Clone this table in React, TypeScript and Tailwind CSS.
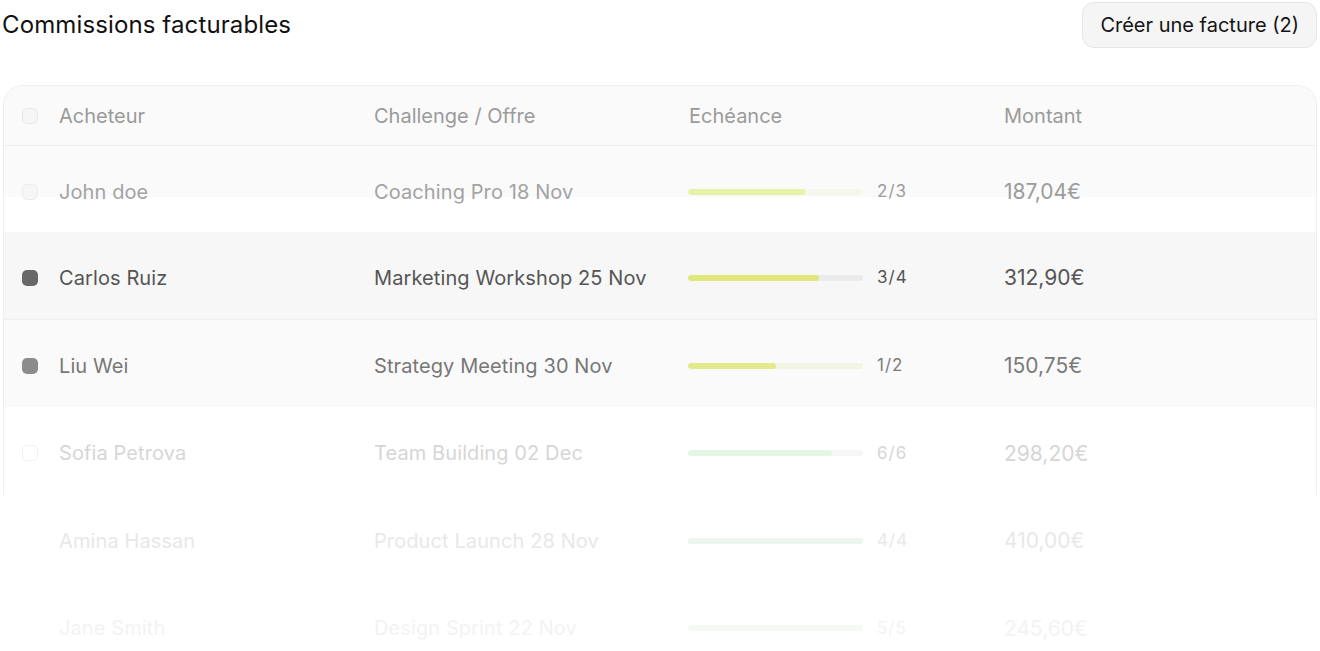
import React from 'react';

type Row = {
  name: string;
  offer: string;
  done: number;
  total: number;
  pct: number;
  amount: string;
  text: string;
  amountText: string;
  box: string;
  bg: string;
  fill: string;
  track: string;
};

const rows: Row[] = [
  {
    name: 'John doe',
    offer: 'Coaching Pro 18 Nov',
    done: 2,
    total: 3,
    pct: 66.6,
    amount: '187,04€',
    text: 'text-[#a3a3a3]',
    amountText: 'text-[#9c9c9c]',
    box: 'border border-[#ececec] bg-[#f6f6f6]',
    bg: 'bg-[linear-gradient(to_bottom,#fafafa_59%,#ffffff_59%)]',
    fill: 'bg-[#e8f1a8]',
    track: 'bg-[#f5f7e8]',
  },
  {
    name: 'Carlos Ruiz',
    offer: 'Marketing Workshop 25 Nov',
    done: 3,
    total: 4,
    pct: 75,
    amount: '312,90€',
    text: 'text-[#555555]',
    amountText: 'text-[#555555]',
    box: 'bg-[#686868]',
    bg: 'bg-[#f7f7f7] border-b border-[#efefef]',
    fill: 'bg-[#dfe878]',
    track: 'bg-[#ebebeb]',
  },
  {
    name: 'Liu Wei',
    offer: 'Strategy Meeting 30 Nov',
    done: 1,
    total: 2,
    pct: 50,
    amount: '150,75€',
    text: 'text-[#777777]',
    amountText: 'text-[#7a7a7a]',
    box: 'bg-[#8c8c8c]',
    bg: 'bg-[#fafafa]',
    fill: 'bg-[#e2ea8c]',
    track: 'bg-[#f2f5e3]',
  },
  {
    name: 'Sofia Petrova',
    offer: 'Team Building 02 Dec',
    done: 6,
    total: 6,
    pct: 82,
    amount: '298,20€',
    text: 'text-[#d6d6d6]',
    amountText: 'text-[#d6d6d6]',
    box: 'border border-[#f2f2f2]',
    bg: 'bg-white',
    fill: 'bg-[#e4f7e4]',
    track: 'bg-[#f6f6f6]',
  },
];

const ghostRows: Row[] = [
  {
    name: 'Amina Hassan',
    offer: 'Product Launch 28 Nov',
    done: 4,
    total: 4,
    pct: 100,
    amount: '410,00€',
    text: 'text-[#e8e8e8]',
    amountText: 'text-[#e8e8e8]',
    box: '',
    bg: 'bg-white',
    fill: 'bg-[#eef4f0]',
    track: 'bg-[#f4f4f4]',
  },
  {
    name: 'Jane Smith',
    offer: 'Design Sprint 22 Nov',
    done: 5,
    total: 5,
    pct: 100,
    amount: '245,60€',
    text: 'text-[#f3f3f3]',
    amountText: 'text-[#f3f3f3]',
    box: '',
    bg: 'bg-white',
    fill: 'bg-[#f6f8f6]',
    track: 'bg-[#f8f8f8]',
  },
];

const cols = 'grid grid-cols-[37px_315px_315px_315px_1fr] items-center pl-[18px]';

function TableRow({ r, h = 'h-[87.5px]' }: { r: Row; h?: string }) {
  return (
    <div className={`${cols} ${h} pt-[5px] ${r.bg}`}>
      <div className={`h-4 w-4 rounded-[5px] ${r.box}`} />
      <span className={`tracking-[0.005em] ${r.text}`}>{r.name}</span>
      <span className={`tracking-[0.005em] ${r.text}`}>{r.offer}</span>
      <div className="-ml-px flex items-center gap-[14px]">
        <div className={`h-[6px] w-[175px] overflow-hidden rounded-full ${r.track}`}>
          <div className={`h-full rounded-full ${r.fill}`} style={{ width: `${r.pct}%` }} />
        </div>
        <span className={`text-[17px] tracking-[0.06em] ${r.amountText}`}>
          {r.done}/{r.total}
        </span>
      </div>
      <span className={`text-[21px] ${r.amountText}`}>{r.amount}</span>
    </div>
  );
}

export default function App() {
  return (
    <div className="h-[651px] w-[1320px] overflow-hidden bg-white font-['Inter',sans-serif] text-[20px]">
      <div className="flex items-start justify-between pl-[2px] pr-[3px] pt-[2px]">
        <h1 className="mt-[6px] text-[24px] font-normal leading-[34px] tracking-[0.005em] text-[#111111]">
          Commissions facturables
        </h1>
        <button className="h-[46px] rounded-[12px] border border-[#e6e6e6] bg-[#f5f5f5] px-[17px] text-[20px] text-[#141414]">
          Créer une facture (2)
        </button>
      </div>

      <div className="mx-[3px] mt-[37px] overflow-hidden rounded-t-[20px] border-x border-t border-[#eeeeee]">
        <div className={`${cols} h-[60px] border-b border-[#eeeeee] bg-[#fafafa]`}>
          <div className="h-4 w-4 rounded-[6px] border border-[#e8e8e8] bg-[#f6f6f6]" />
          <span className="text-[#9a9a9a]">Acheteur</span>
          <span className="text-[#9a9a9a]">Challenge / Offre</span>
          <span className="text-[#9a9a9a]">Echéance</span>
          <span className="text-[#9a9a9a]">Montant</span>
        </div>
        {rows.map((r, i) => (
          <TableRow key={r.name} r={r} h={i === 0 ? 'h-[86px]' : 'h-[87.5px]'} />
        ))}
      </div>
      <div className="mx-[3px] pl-px">
        {ghostRows.map((r) => (
          <TableRow key={r.name} r={r} />
        ))}
      </div>
    </div>
  );
}
